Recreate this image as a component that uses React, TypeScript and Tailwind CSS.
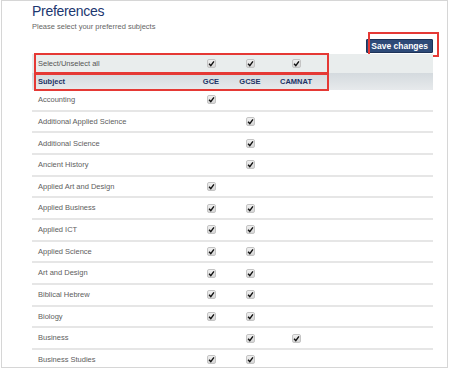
const subjects: [string, boolean, boolean, boolean][] = [
  ["Accounting", true, false, false],
  ["Additional Applied Science", false, true, false],
  ["Additional Science", false, true, false],
  ["Ancient History", false, true, false],
  ["Applied Art and Design", true, false, false],
  ["Applied Business", true, true, false],
  ["Applied ICT", true, true, false],
  ["Applied Science", true, true, false],
  ["Art and Design", true, true, false],
  ["Biblical Hebrew", true, true, false],
  ["Biology", true, true, false],
  ["Business", false, true, true],
  ["Business Studies", true, true, false],
];

function Check() {
  return (
    <span className="inline-flex h-[9px] w-[9px] items-center justify-center rounded-[2px] border border-[#c4c4c4] bg-gradient-to-b from-[#f0f0f0] to-[#d6d6d6]">
      <svg viewBox="0 0 10 10" className="h-[7px] w-[7px]">
        <path d="M1.5 5.5 L4 8 L8.5 2" fill="none" stroke="#111" strokeWidth="2" />
      </svg>
    </span>
  );
}

function Cell({ on }: { on: boolean }) {
  return <div className="flex items-center justify-center">{on && <Check />}</div>;
}

export default function App() {
  return (
    <div className="h-[369px] w-[450px] bg-white font-['Liberation_Sans',Arial,sans-serif]">
      <div className="ml-[1px] h-[368px] w-[447px] overflow-hidden border border-[#d6d6d6] pl-[30px] pr-[14px]">
        <h1 className="pt-[1px] text-[14px] leading-[18px] tracking-[-0.3px] text-[#1c3770]">Preferences</h1>
        <p className="mt-[2px] text-[7.5px] leading-[10px] text-[#666]">Please select your preferred subjects</p>

        <div className="relative mt-[7px] flex justify-end">
          <button className="h-[14px] rounded-[1px] border border-[#1d3358] bg-[#2d4a78] px-[4px] text-[8.5px] font-bold leading-[12px] text-white">
            Save changes
          </button>
          <div className="absolute right-[-6px] top-[-7px] h-[25px] w-[71px] border-2 border-[#e53935]" />
        </div>

        <div className="relative mt-[1px]">
          <div className="grid h-[19px] grid-cols-[160px_38px_40px_52px_1fr] items-center bg-[#e9eded] text-[7.5px] text-[#555]">
            <span className="pl-[6px]">Select/Unselect all</span>
            <Cell on />
            <Cell on />
            <Cell on />
            <span />
          </div>
          <div className="grid h-[17px] grid-cols-[160px_38px_40px_52px_1fr] items-center bg-gradient-to-b from-[#d4dade] to-[#e7eaec] text-[7.5px] font-bold text-[#1c3366]">
            <span className="pl-[6px]">Subject</span>
            <span className="text-center">GCE</span>
            <span className="text-center">GCSE</span>
            <span className="text-center">CAMNAT</span>
            <span />
          </div>
          {subjects.map(([name, gce, gcse, camnat]) => (
            <div
              key={name}
              className="grid h-[21.67px] grid-cols-[160px_38px_40px_52px_1fr] items-center border-b-2 border-[#e6e6e6] text-[7.5px] text-[#606060]"
            >
              <span className="pl-[6px]">{name}</span>
              <Cell on={gce} />
              <Cell on={gcse} />
              <Cell on={camnat} />
              <span />
            </div>
          ))}
          <div className="absolute left-[2px] top-[-1px] h-[21px] w-[295px] border-2 border-[#e53935]" />
          <div className="absolute left-[2px] top-[19px] h-[18px] w-[295px] border-2 border-[#e53935]" />
        </div>
      </div>
    </div>
  );
}
